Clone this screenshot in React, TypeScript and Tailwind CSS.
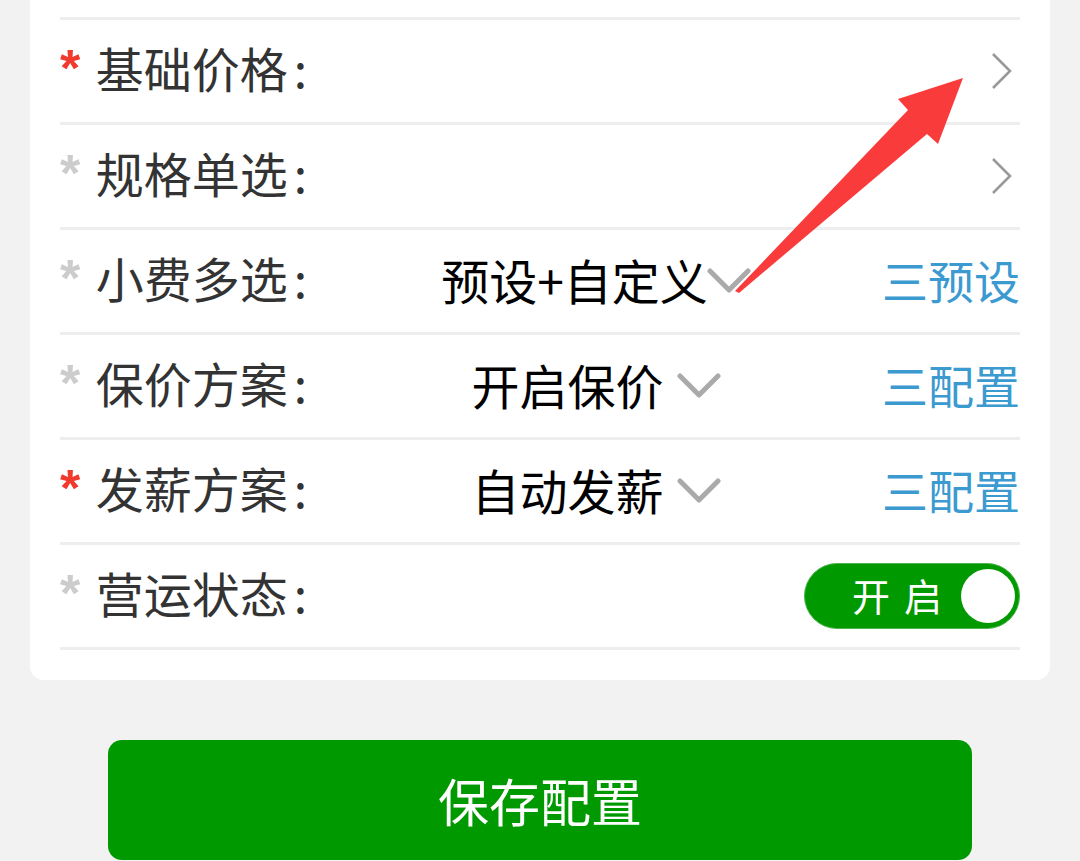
import React from "react";

const font = { fontFamily: '"Noto Sans CJK SC", "Noto Sans", sans-serif' };

const Star = ({ required }: { required?: boolean }) => (
  <span
    className={`w-[36px] self-start mt-[22px] text-[52px] font-bold leading-[52px] ${
      required ? "text-[#f03a2e]" : "text-[#cccccc]"
    }`}
    style={{ fontFamily: '"Liberation Sans", Arial, sans-serif' }}
  >
    *
  </span>
);

const ChevronRight = () => (
  <svg width="22" height="38" viewBox="0 0 22 38" className="mr-[7px]">
    <polyline
      points="2,2 19,19 2,36"
      fill="none"
      stroke="#999999"
      strokeWidth="2.6"
    />
  </svg>
);

const ChevronDown = () => (
  <svg width="44" height="26" viewBox="0 0 44 26">
    <polyline
      points="3,3 22,22 41,3"
      fill="none"
      stroke="#aaaaaa"
      strokeWidth="5"
      strokeLinecap="round"
      strokeLinejoin="round"
    />
  </svg>
);

const Label = ({ text, required }: { text: string; required?: boolean }) => (
  <div className="flex w-[247px] h-full items-center shrink-0">
    <Star required={required} />
    <span className="mb-[8px] text-[48px] leading-none text-[#333333] whitespace-nowrap">
      {text}
      <span className="ml-[6px]">:</span>
    </span>
  </div>
);

const Row = ({ children }: { children: React.ReactNode }) => (
  <div className="flex items-center h-[105px] border-b-[3px] border-[#eeeeee]">
    {children}
  </div>
);

const Select = ({ value, gap }: { value: string; gap: string }) => (
  <div className="flex-1 flex items-center justify-center">
    <span className="mb-[4px] text-[48px] leading-none text-black whitespace-nowrap">
      {value}
    </span>
    <span className={gap}>
      <ChevronDown />
    </span>
  </div>
);

const Link = ({ text }: { text: string }) => (
  <div className="w-[135px] flex justify-end">
    <span className="mb-[4px] text-[46px] leading-none text-[#3b9ad0] whitespace-nowrap">
      {text}
    </span>
  </div>
);

export default function App() {
  return (
    <div className="relative w-[1080px] h-[861px] bg-[#f2f2f2] overflow-hidden" style={font}>
      <div className="mx-[30px] bg-white rounded-b-[14px] px-[30px] pt-[17px] pb-[30px]">
        <div className="border-t-[3px] border-[#eeeeee]" />
        <Row>
          <Label text="基础价格" required />
          <div className="flex-1" />
          <ChevronRight />
        </Row>
        <Row>
          <Label text="规格单选" />
          <div className="flex-1" />
          <ChevronRight />
        </Row>
        <Row>
          <Label text="小费多选" />
          <Select value="预设+自定义" gap="ml-[-1px]" />
          <Link text="三预设" />
        </Row>
        <Row>
          <Label text="保价方案" />
          <Select value="开启保价" gap="ml-[13px]" />
          <Link text="三配置" />
        </Row>
        <Row>
          <Label text="发薪方案" required />
          <Select value="自动发薪" gap="ml-[13px]" />
          <Link text="三配置" />
        </Row>
        <Row>
          <Label text="营运状态" />
          <div className="flex-1" />
          <div className="flex items-center w-[216px] h-[66px] rounded-full bg-[#009900] border border-[#4cb44c] pl-[47px] pr-[4px]">
            <span className="flex-1 mb-[2px] text-[38px] leading-none text-white tracking-[14px] whitespace-nowrap">
              开启
            </span>
            <span className="w-[54px] h-[54px] rounded-full bg-white" />
          </div>
        </Row>
      </div>

      <button className="block mx-auto mt-[60px] w-[864px] h-[120px] rounded-[14px] bg-[#009900] text-white text-[51px] leading-none">
        保存配置
      </button>

      <svg
        className="absolute top-0 left-0 pointer-events-none"
        width="1080"
        height="861"
        viewBox="0 0 1080 861"
      >
        <polygon
          points="963,78 938,144 927,134 739,293 735,291 908,110 898,99"
          fill="#fa3b3b"
        />
      </svg>
    </div>
  );
}
